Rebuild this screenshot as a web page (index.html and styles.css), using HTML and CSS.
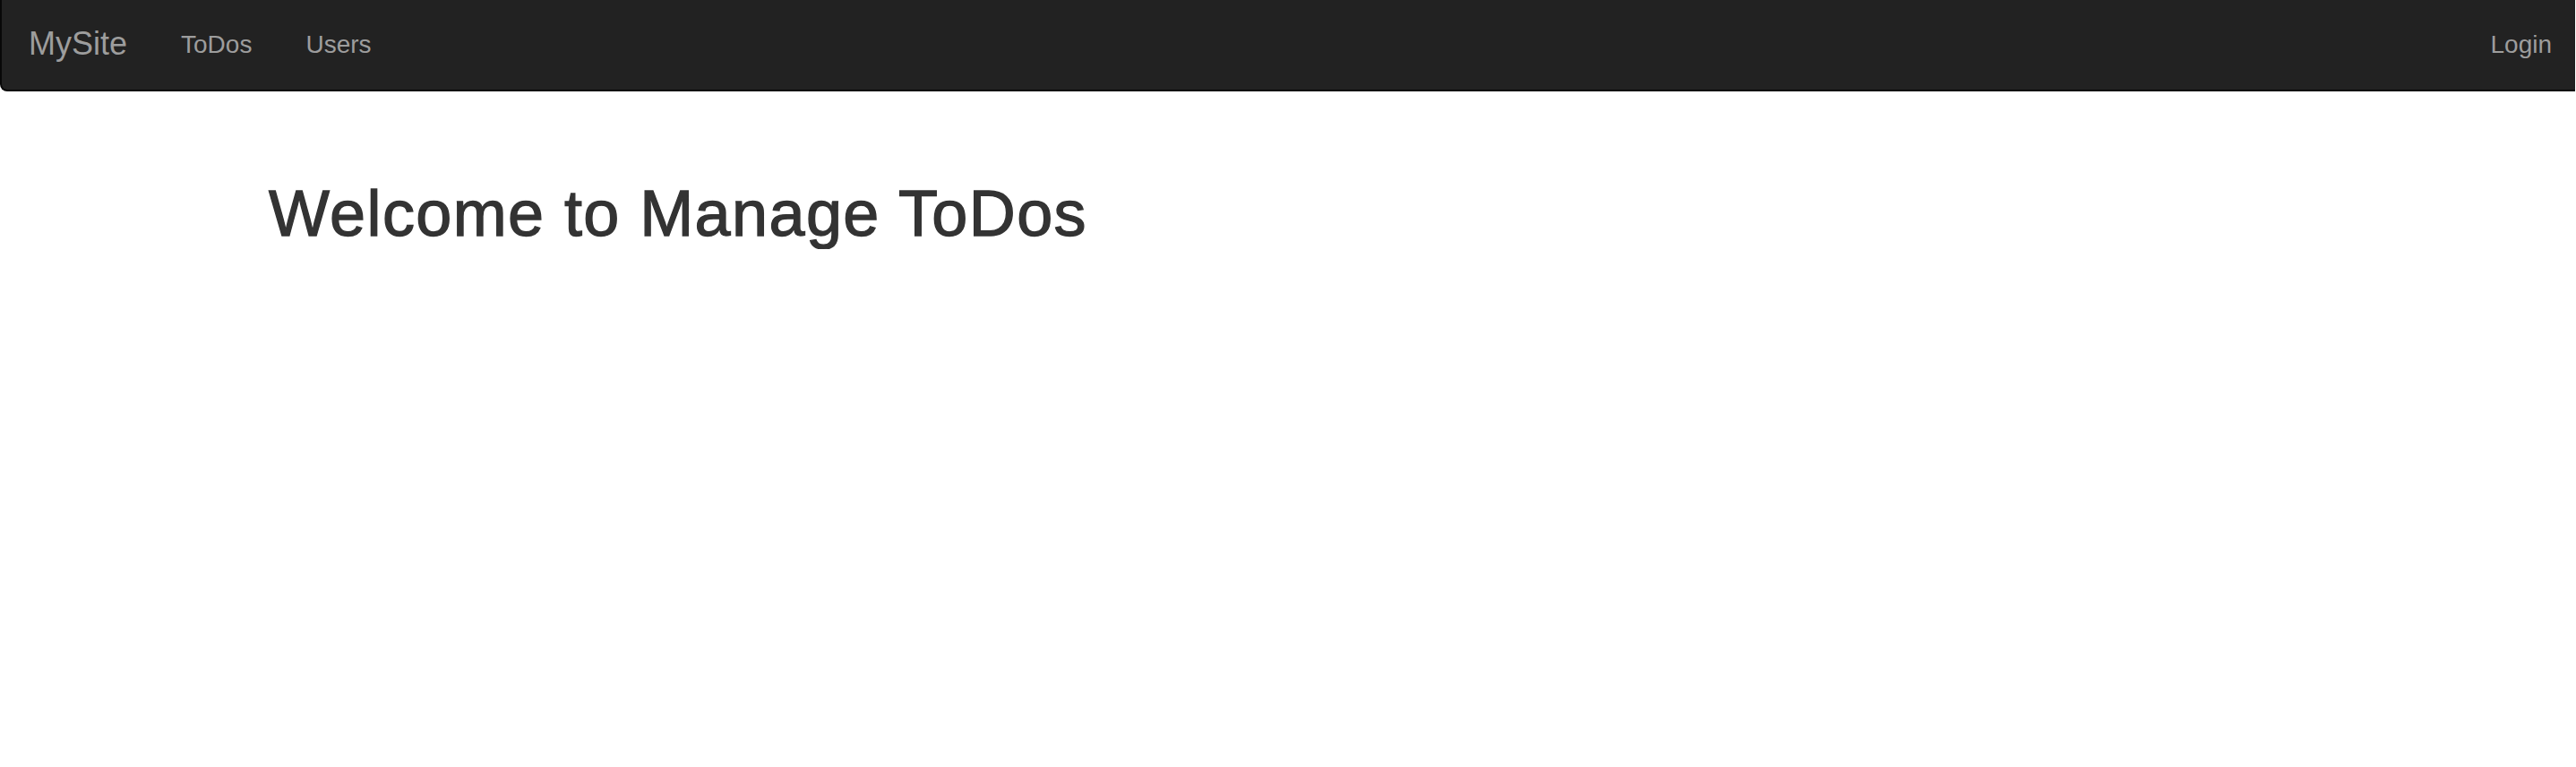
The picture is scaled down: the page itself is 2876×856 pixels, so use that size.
FILE: index.html
```html
<!DOCTYPE html>
<html lang="en">
<head>
<meta charset="utf-8">
<title>MySite</title>
<link rel="stylesheet" href="styles.css">
</head>
<body>
<nav class="navbar">
  <a class="brand" href="#">MySite</a>
  <ul class="nav">
    <li><a class="nav-link" href="#">ToDos</a></li>
    <li><a class="nav-link" href="#">Users</a></li>
  </ul>
  <ul class="nav nav-right">
    <li><a class="nav-link" href="#">Login</a></li>
  </ul>
</nav>
<main class="container">
  <h1 class="title">Welcome to Manage ToDos</h1>
</main>
</body>
</html>
```

FILE: styles.css
```css
html, body {
  margin: 0;
  padding: 0;
  background: #fff;
}

body {
  font-family: "Liberation Sans", Arial, sans-serif;
  color: #333;
}

.navbar {
  display: flex;
  align-items: flex-start;
  height: 100px;
  margin: 0 1px 40px 0;
  background: #222;
  border-left: 2px solid #080808;
  border-bottom: 2px solid #080808;
  border-radius: 0 0 0 8px;
}

.brand {
  display: block;
  padding: 29px 30px 0 30px;
  font-size: 36px;
  line-height: 40px;
  color: #9d9d9d;
  text-decoration: none;
}

.nav {
  display: flex;
  list-style: none;
  margin: 0;
  padding: 0;
}

.nav-right {
  margin-left: auto;
  margin-right: -4px;
}

.nav-link {
  display: block;
  padding: 30px 30px;
  font-size: 28px;
  line-height: 40px;
  color: #9d9d9d;
  text-decoration: none;
}

.container {
  width: 2340px;
  box-sizing: border-box;
  margin: 0 auto;
  padding: 57px 30px 0 32px;
}

.title {
  margin: 0;
  font-size: 72px;
  font-weight: 500;
  line-height: 1.1;
  letter-spacing: 1.4px;
  color: #333;
  -webkit-text-stroke: 1.3px #333;
}
```
